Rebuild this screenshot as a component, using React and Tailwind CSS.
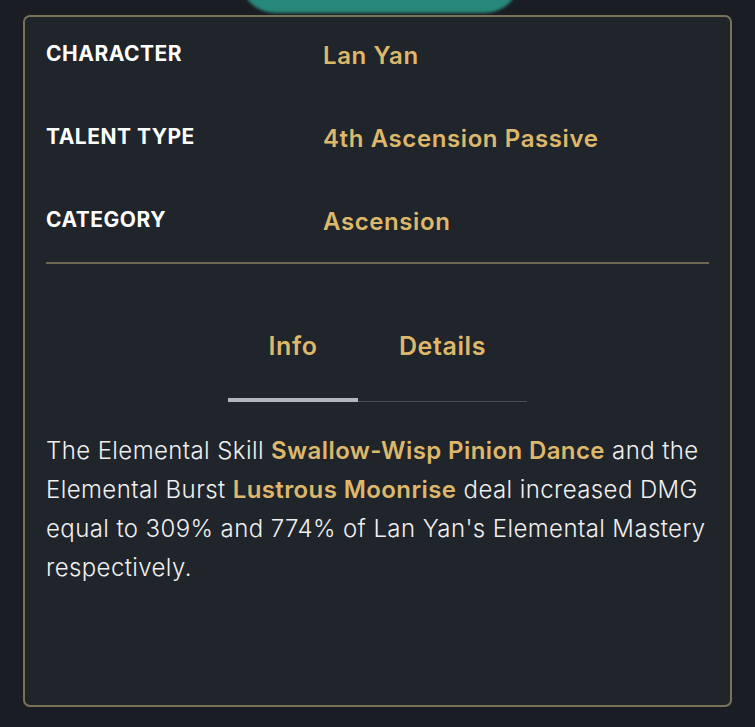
import React from "react";

const rows = [
  { label: "CHARACTER", value: "Lan Yan" },
  { label: "TALENT TYPE", value: "4th Ascension Passive" },
  { label: "CATEGORY", value: "Ascension" },
];

export default function App() {
  return (
    <div
      className="relative w-[755px] h-[727px] overflow-hidden bg-[#1b1d24] pt-[15px] px-[23px]"
      style={{ fontFamily: "Inter, 'Noto Sans', sans-serif" }}
    >
      {/* avatar peeking above the card */}
      <div className="absolute left-[240px] top-[-57px] w-[280px] h-[70px] rounded-full bg-[#26877a] blur-[1.5px]" />

      <div className="relative h-[692px] rounded-[7px] border-2 border-[#797259] bg-[#20242b] px-[21px]">
        <div className="pt-[22px]">
          {rows.map((r) => (
            <div key={r.label} className="flex h-[83px]">
              <div className="w-[277px] text-[21px] leading-[30px] font-bold tracking-[0.5px] text-white">
                {r.label}
              </div>
              <div className="pt-[1px] text-[24px] leading-[32px] font-semibold tracking-[0.6px] text-[#ddb86b]">
                {r.value}
              </div>
            </div>
          ))}
        </div>

        <div className="mt-[-26px] h-[2px] bg-[#6e6752]" />

        <div className="flex justify-center pt-[66px]">
          <div className="flex flex-col">
            <div className="flex">
              <div className="w-[130px] text-center text-[25px] leading-[32px] font-semibold tracking-[0.6px] text-[#ddb86b]">
                Info
              </div>
              <div className="w-[169px] text-center text-[25px] leading-[32px] font-semibold tracking-[0.6px] text-[#ddb86b]">
                Details
              </div>
            </div>
            <div className="mt-[36px] flex items-end">
              <div className="w-[130px] h-[4px] bg-[#b3b6bd]" />
              <div className="w-[169px] h-[1px] bg-[#4a4f5a]" />
            </div>
          </div>
        </div>

        <p className="mt-[29px] text-[24px] leading-[39px] font-light tracking-[0.4px] text-[#f0f0f0]">
          The Elemental Skill{" "}
          <span className="font-semibold text-[#ddb86b]">Swallow-Wisp Pinion Dance</span>{" "}
          and the Elemental Burst{" "}
          <span className="font-semibold text-[#ddb86b]">Lustrous Moonrise</span> deal
          increased DMG equal to 309% and 774% of Lan Yan's Elemental Mastery
          respectively.
        </p>
      </div>
    </div>
  );
}
